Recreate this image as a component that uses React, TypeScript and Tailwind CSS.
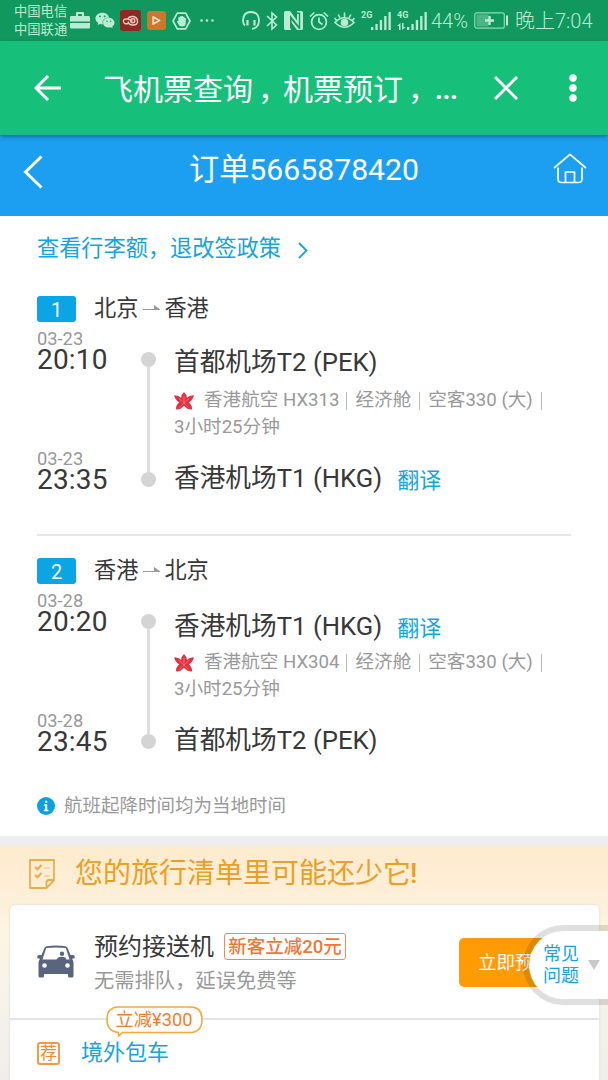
import React from "react";
import { FaWeixin } from "react-icons/fa";

type IconProps = { className?: string };

const Briefcase = ({ className }: IconProps) => (
  <svg viewBox="0 0 20 17" className={className} fill="currentColor">
    <path d="M6 4V1.2Q6 0 7.2 0h5.6Q14 0 14 1.2V4h4.600Q20 4 20 5.400V9.500H0V5.400Q0 4 1.400 4ZM8 4h4V2H8ZM0 11h20v4.300q0 1.200-1.200 1.200H1.200Q0 16.500 0 15.300Z" />
  </svg>
);

const CloudApp = ({ className }: IconProps) => (
  <svg viewBox="0 0 21 21" className={className}>
    <rect width="21" height="21" rx="3" fill="#8f2a22" />
    <g fill="none" stroke="#e8c9bd" strokeWidth="1.400">
      <path d="M8 13.500q-4 1-4.500-2T7.500 9q3 .5 5 2.500M7.500 9.500Q9 6 13 6.500t4.500 4.500-4.500 4q-4 .3-5-3.500" />
      <circle cx="12.800" cy="10.800" r="2" />
    </g>
  </svg>
);

const PlayApp = ({ className }: IconProps) => (
  <svg viewBox="0 0 19 19" className={className}>
    <rect width="19" height="19" rx="3" fill="#c9782c" />
    <path d="M6.200 6 12.500 9.500 6.200 13Z" fill="none" stroke="#f3dcc0" strokeWidth="1.900" strokeLinejoin="round" />
  </svg>
);

const HandHexagon = ({ className }: IconProps) => (
  <svg viewBox="0 0 19 18" className={className}>
    <path d="M5.300 1.200h8.400L18 9l-4.300 7.800H5.300L1 9Z" fill="none" stroke="currentColor" strokeWidth="1.700" strokeLinejoin="round" />
    <path d="M4.800 9.500 6.300 9V5.300h1.500V4.300h1.600V4H11v.8h1.400V6h1.400v5q0 3.500-3.800 3.500-3 0-3.800-2.500Z" fill="currentColor" />
  </svg>
);

const Headset = ({ className }: IconProps) => (
  <svg viewBox="0 0 18 19" className={className} fill="none" stroke="currentColor" strokeWidth="1.800">
    <path d="M3 14.500Q1 13 1 9.500 1.200 1 9 1t8 8.500q-.2 7.500-7 8.300" />
    <path d="M5.500 9v5.500M12.500 9v5.500" strokeWidth="2.200" />
  </svg>
);

const BluetoothMark = ({ className }: IconProps) => (
  <svg viewBox="0 0 12 20" className={className} fill="none" stroke="currentColor" strokeWidth="1.600">
    <path d="m1 5 9.500 9L6 18V2l4.500 4L1 15" />
  </svg>
);

const Nfc = ({ className }: IconProps) => (
  <svg viewBox="0 0 19 19" className={className} fill="currentColor">
    <path d="M0 1.500Q0 0 1.500 0H6l7 9.500V3h1.800v12L6 4v13.500h1V19H1.500Q0 19 0 17.500ZM19 17.500q0 1.500-1.500 1.500H13L7.500 11.500V9l7.500 9h1.200V1.500H13V0h4.500Q19 0 19 1.500Z" />
  </svg>
);

const Alarm = ({ className }: IconProps) => (
  <svg viewBox="0 0 20 20" className={className} fill="none" stroke="currentColor" strokeWidth="1.700">
    <circle cx="10" cy="11" r="7.400" />
    <path d="M10 6.500V11l3.500 2.500M1 5.500 5.300 1.500M19 5.500l-4.300-4" />
  </svg>
);

const Eye = ({ className }: IconProps) => (
  <svg viewBox="0 0 21 19" className={className} fill="none" stroke="currentColor" strokeWidth="1.600">
    <path d="M1 11.500Q10.500 2 20 11.500 10.500 21 1 11.500Z" />
    <circle cx="10.500" cy="11.500" r="3" fill="currentColor" />
    <path d="M10.500 6V1.500M6 7 4.200 3.500M15 7l1.800-3.500M2.500 9.500.700 7M18.500 9.500l1.800-2.500" />
  </svg>
);

const Signal = ({ className }: IconProps) => (
  <svg viewBox="0 0 20 18" className={className} fill="currentColor">
    <path d="M0 15h2.300v3H0ZM4.400 12h2.300v6H4.400ZM8.800 8h2.300v10H8.800ZM13.200 4h2.300v14h-2.300ZM17.500 0h2.300v18h-2.300Z" />
  </svg>
);

const Battery = ({ className }: IconProps) => (
  <svg viewBox="0 0 35 17" className={className}>
    <rect x=".8" y=".8" width="29.500" height="15.400" rx="2" fill="none" stroke="currentColor" strokeWidth="1.200" opacity=".75" />
    <rect x="2.500" y="2.500" width="12" height="12" fill="currentColor" opacity=".35" />
    <path d="M14.300 4h2.400v3.300H20v2.400h-3.300V13h-2.400V9.700H11V7.300h3.300ZM32 3.500h2v10h-2Z" fill="currentColor" />
  </svg>
);

const Maple = () => (
  <svg viewBox="0 0 20 18" className="h-[18px] w-[20px] shrink-0" fill="#e5303f">
    <path d="M10 0q2.800 2.500 2.900 5.800Q15.500 3 19.800 3.200q-.5 4.600-5 7.200 3.300 2.400 3.400 6.900-4.700.5-6.700-2L10 13.800l-1.500 1.500q-2 2.500-6.700 2 .1-4.500 3.400-6.900Q.7 7.800.2 3.200 4.500 3 7.100 5.800 7.200 2.500 10 0Z" />
    <path d="M10 11V4M10 11l5-4.500M10 11 5 6.500M10 11l4.500 4.500M10 11l-4.500 4.500" stroke="#f27a83" strokeWidth=".8" />
  </svg>
);

const Car = () => (
  <svg viewBox="0 0 38 33" className="h-[33px] w-[38px]">
    <path
      fillRule="evenodd"
      fill="#59657d"
      d="M9.500 1.200Q19 0 28.500 1.200q1.500.3 2.200 2L33.500 10h2.200q2 0 2 1.500v1.800l-2.700.5q1.500 1.800 1.500 4.200v13q0 1.500-1.500 1.500h-2.500q-1.500 0-1.500-1.500V29H7v2q0 1.500-1.500 1.500H3Q1.500 32.500 1.500 31V18q0-2.400 1.500-4.200l-2.700-.5v-1.800Q.3 10 2.300 10h2.200L7.300 3.200q.7-1.700 2.200-2ZM9.200 3 5.500 14.500h27L28.800 3q-9.800-1-19.600 0Z"
    />
    <circle cx="25" cy="8.800" r="2.200" fill="#59657d" />
    <path d="M19.500 15q.5-3 5-3.200t5 3.200Z" fill="#59657d" />
    <circle cx="7.500" cy="20.500" r="2.300" fill="#fff" />
    <circle cx="30.500" cy="20.500" r="2.300" fill="#fff" />
  </svg>
);

const Checklist = () => (
  <svg viewBox="0 0 26 30" className="h-[30px] w-[26px]" fill="none" stroke="#e9ae52" strokeWidth="1.800">
    <path d="M1 1h24v20.500L17.500 29H1ZM25 21h-5q-2.500 0-2.500 2.500V29" strokeLinejoin="round" />
    <path d="m6 8 2.500 2.300L12.500 6M6 16l2.500 2.300 4-4.300" strokeWidth="2.200" />
    <path d="M15 9h6M15 17h6" strokeWidth="1.200" opacity=".7" />
  </svg>
);

function StatusBar() {
  return (
    <div className="flex h-[41px] items-center overflow-hidden bg-[#11985f] pl-[14px] text-[#b9ecd2]">
      <div className="w-[56px] shrink-0 pt-px text-[13.300px] leading-[18px] whitespace-nowrap">
        <div>中国电信</div>
        <div>中国联通</div>
      </div>
      <Briefcase className="h-[17px] w-[20px] shrink-0" />
      <FaWeixin className="ml-[5px] h-[19px] w-[20px] shrink-0" />
      <CloudApp className="ml-[5px] h-[21px] w-[21px] shrink-0" />
      <PlayApp className="ml-[6px] h-[19px] w-[19px] shrink-0" />
      <HandHexagon className="ml-[6px] h-[18px] w-[19px] shrink-0" />
      <svg viewBox="0 0 14 3" className="ml-[9px] h-[3px] w-[14px] shrink-0" fill="currentColor">
        <circle cx="1.500" cy="1.500" r="1.300" />
        <circle cx="7" cy="1.500" r="1.300" />
        <circle cx="12.500" cy="1.500" r="1.300" />
      </svg>
      <Headset className="ml-[28px] h-[19px] w-[18px] shrink-0" />
      <BluetoothMark className="ml-[6px] h-[20px] w-[12px] shrink-0" />
      <Nfc className="ml-[6px] h-[19px] w-[19px] shrink-0" />
      <Alarm className="ml-[6px] h-[20px] w-[20px] shrink-0" />
      <Eye className="ml-[5px] h-[19px] w-[21px] shrink-0" />
      <div className="ml-[6px] flex h-[19px] shrink-0">
        <span className="w-[10px] text-[9px] leading-[9px] font-bold">2G</span>
        <Signal className="mt-[1px] h-[18px] w-[20px]" />
      </div>
      <div className="ml-[6px] flex h-[19px] shrink-0">
        <div className="w-[10px] text-[9px] leading-[9px] font-bold">
          <div>4G</div>
          <svg viewBox="0 0 9 7" className="mt-[3px] h-[7px] w-[9px]" fill="currentColor">
            <path d="M3.500 7H2V3H0L3.500 0ZM5 0h1.500v4h2L5 7Z" />
          </svg>
        </div>
        <Signal className="mt-[1px] h-[18px] w-[20px]" />
      </div>
      <span className="ml-[4px] w-[43px] shrink-0 text-[20px] leading-[24px] font-light">44%</span>
      <Battery className="h-[17px] w-[35px] shrink-0" />
      <span className="ml-[6px] shrink-0 text-[20px] leading-[24px] font-light whitespace-nowrap">晚上7:04</span>
    </div>
  );
}

function BrowserBar() {
  return (
    <header className="relative z-10 flex h-[94px] items-center bg-[#16c07a] text-white shadow-[0_2px_4px_rgba(0,0,0,0.3)]">
      <svg viewBox="0 0 28 26" className="ml-[34px] h-[26px] w-[28px] shrink-0" fill="none" stroke="currentColor" strokeWidth="3">
        <path d="M27 13H2.500M14 1 2 13l12 12" />
      </svg>
      <h1 className="ml-[41px] flex w-[391px] shrink-0 pt-[4px] text-[30px] leading-[36px] whitespace-nowrap">
        <span>飞机票查询</span>
        <span className="w-[30px] indent-[5px]">，</span>
        <span>机票预订</span>
        <span className="w-[30px] indent-[5px]">，</span>
        <span className="ml-[2px] text-[27px] font-bold tracking-[-0.300px]">...</span>
      </h1>
      <svg viewBox="0 0 24 24" className="h-[24px] w-[24px] shrink-0" fill="none" stroke="currentColor" strokeWidth="3">
        <path d="m1 1 22 22M23 1 1 23" />
      </svg>
      <svg viewBox="0 0 8 28" className="ml-[51px] h-[28px] w-[8px] shrink-0" fill="currentColor">
        <circle cx="4" cy="4" r="3.700" />
        <circle cx="4" cy="14" r="3.700" />
        <circle cx="4" cy="24" r="3.700" />
      </svg>
    </header>
  );
}

function OrderBar() {
  return (
    <div className="flex h-[81px] items-start justify-between bg-[#1c9ff0] pr-[21px] pl-[23px] text-white">
      <svg viewBox="0 0 20 34" className="mt-[20px] h-[34px] w-[20px]" fill="none" stroke="currentColor" strokeWidth="3">
        <path d="M18.500 1.500 2.500 17l16 15.500" />
      </svg>
      <h2 className="mt-[17px] ml-[12px] text-[30.200px] leading-[36px]">订单5665878420</h2>
      <svg viewBox="0 0 34 31" className="mt-[18px] h-[31px] w-[34px]" fill="none" stroke="currentColor" strokeWidth="1.700" strokeLinejoin="round">
        <path d="M1 15 17 1.300 33 15" />
        <path d="M5 14.500V26q0 3.500 3.500 3.500h17q3.500 0 3.500-3.500V14.500M12.500 29.500V19h9v10.500" />
      </svg>
    </div>
  );
}

type Stop = { date: string; time: string; airport: string; translate?: boolean };
type Leg = { index: number; from: string; to: string; flight: string; stops: [Stop, Stop] };

const legs: Leg[] = [
  {
    index: 1,
    from: "北京",
    to: "香港",
    flight: "HX313",
    stops: [
      { date: "03-23", time: "20:10", airport: "首都机场T2 (PEK)" },
      { date: "03-23", time: "23:35", airport: "香港机场T1 (HKG)", translate: true },
    ],
  },
  {
    index: 2,
    from: "香港",
    to: "北京",
    flight: "HX304",
    stops: [
      { date: "03-28", time: "20:20", airport: "香港机场T1 (HKG)", translate: true },
      { date: "03-28", time: "23:45", airport: "首都机场T2 (PEK)" },
    ],
  },
];

const StopTime = ({ stop }: { stop: Stop }) => (
  <div className="h-[40px]">
    <div className="text-[18.300px] leading-[18px] text-[#999]">{stop.date}</div>
    <div className="text-[28px] leading-[24px] tracking-[0.200px] text-[#383838]">{stop.time}</div>
  </div>
);

const StopAirport = ({ stop }: { stop: Stop }) => (
  <div className="flex h-[30px] items-center whitespace-nowrap">
    <span className="text-[25.700px] leading-[30px] text-[#383838]">{stop.airport}</span>
    {stop.translate && <a className="mt-[5px] ml-[15px] text-[22px] leading-[26px] text-[#12a5e6]">翻译</a>}
  </div>
);

const Bar = () => <span className="h-[18px] w-px bg-[#bbb]" />;

function LegView({ leg }: { leg: Leg }) {
  const [depart, arrive] = leg.stops;
  return (
    <section>
      <div className="flex h-[26px] items-center">
        <span className="flex h-[26px] w-[39px] items-center justify-center rounded-[3px] bg-[#0ba5e5] pt-px text-[20px] leading-[26px] text-white">
          {leg.index}
        </span>
        <div className="mb-[3px] ml-[18px] flex items-center text-[22.200px] leading-[26px] text-[#383838]">
          {leg.from}
          <svg viewBox="0 0 17 6" className="mr-[4px] ml-[5px] h-[6px] w-[17px]">
            <path d="M0 4.500h16.500L11.500 1v3" fill="#999" stroke="#999" strokeWidth="1.100" />
          </svg>
          {leg.to}
        </div>
      </div>
      <div className="mt-[8px] flex h-[160px]">
        <div className="flex w-[104px] shrink-0 flex-col gap-[80px]">
          <StopTime stop={depart} />
          <StopTime stop={arrive} />
        </div>
        <div className="flex h-[157px] w-[15px] shrink-0 flex-col items-center pt-[22px]">
          <span className="h-[15px] w-[15px] shrink-0 rounded-full bg-[#d4d4d4]" />
          <span className="w-[3px] flex-1 bg-[#dedede]" />
          <span className="h-[15px] w-[15px] shrink-0 rounded-full bg-[#d4d4d4]" />
        </div>
        <div className={depart.translate ? "ml-[18px] pt-[19px]" : "ml-[18px] pt-[17px]"}>
          <StopAirport stop={depart} />
          <div
            className={
              (depart.translate ? "mt-[8px]" : "mt-[10px]") + " flex h-[27px] items-center text-[18.600px] leading-[27px] whitespace-nowrap text-[#999]"
            }
          >
            <Maple />
            <span className="mr-[7px] ml-[10px]">香港航空 {leg.flight}</span>
            <Bar />
            <span className="mx-[8px]">经济舱</span>
            <Bar />
            <span className="mx-[8px]">空客330 (大)</span>
            <Bar />
          </div>
          <div className="text-[18.600px] leading-[27px] text-[#999]">3小时25分钟</div>
          <div className="mt-[22px]">
            <StopAirport stop={arrive} />
          </div>
        </div>
      </div>
    </section>
  );
}

function Itinerary() {
  return (
    <main className="h-[620px] bg-white px-[37px]">
      <a className="flex h-[66px] items-center text-[22.200px] text-[#17a3dd]">
        查看行李额，退改签政策
        <svg viewBox="0 0 10 17" className="mt-[3px] ml-[17px] h-[17px] w-[10px]" fill="none" stroke="currentColor" strokeWidth="1.800">
          <path d="m1 1 7.500 7.500L1 16" />
        </svg>
      </a>
      <div className="mt-[14px]">
        <LegView leg={legs[0]} />
      </div>
      <hr className="mt-[44px] h-[2px] border-0 bg-[#e6e6e6]" />
      <div className="mt-[22px]">
        <LegView leg={legs[1]} />
      </div>
      <div className="mt-[41px] flex h-[26px] items-center text-[18.500px] leading-[26px] text-[#999]">
        <svg viewBox="0 0 18 18" className="mr-[9px] h-[18px] w-[18px]">
          <circle cx="9" cy="9" r="9" fill="#0ba0e4" />
          <path d="M8 3.800h2.200V6H8ZM7 7.300h3.200v5.500h1.200v1.400H6.800v-1.400H8V8.700H7Z" fill="#fff" />
        </svg>
        航班起降时间均为当地时间
      </div>
    </main>
  );
}

function Promo() {
  return (
    <section className="h-[234px] bg-[linear-gradient(180deg,#fdebcd_0,#fdefd8_50px,#fdf5e3_85px,#f7f3ea_150px,#f0eeec_234px)]">
      <div className="flex h-[59px] items-center pb-[4px] pl-[29px]">
        <Checklist />
        <h3 className="ml-[20px] pt-px text-[28px] leading-[36px] text-[#eb9f26]">
          您的旅行清单里可能还少它<span className="ml-[-1px] font-medium">!</span>
        </h3>
      </div>
      <div className="relative ml-[10px] h-[175px] w-[589px] rounded-t-[5px] bg-white shadow-[0_0_3px_rgba(0,0,0,0.1)]">
        <div className="flex h-[115px] items-center border-b-2 border-[#e4e4e4] pl-[27px]">
          <Car />
          <div className="ml-[19px] flex-1 pt-[5px]">
            <div className="flex items-center">
              <span className="text-[24px] leading-[34px] text-[#383838]">预约接送机</span>
              <span className="ml-[10px] flex h-[27px] w-[122px] items-center justify-center rounded-[3px] border-[1.500px] border-[#f08a50] text-[18.500px] leading-[24px] font-medium whitespace-nowrap text-[#f0773a]">
                新客立减20元
              </span>
            </div>
            <div className="text-[20.300px] leading-[35px] text-[#999]">无需排队，延误免费等</div>
          </div>
          <button className="mt-[2px] mr-[28px] h-[49px] w-[112px] rounded-[5px] bg-[#ff9b05] pt-[2px] text-[18.500px] text-white">立即预定</button>
        </div>
        <div className="flex h-[60px] items-center pt-[6px] pl-[27px]">
          <span className="flex h-[23px] w-[23px] items-center justify-center rounded-[3px] border-2 border-[#f39a4a] text-[17px] leading-[19px] text-[#f08a35]">
            荐
          </span>
          <span className="ml-[21px] text-[22px] leading-[30px] text-[#17a3dd]">境外包车</span>
        </div>
        <div className="absolute top-[101px] left-[96px] h-[31px] w-[97px]">
          <svg viewBox="0 0 97 31" className="absolute inset-0 h-[31px] w-[97px]" fill="#fff" stroke="#f3a93b" strokeWidth="1.600">
            <path d="M12 1h72.500Q96 1 96 13.500T84.500 26.500H16.500L12.500 30v-3.500Q1 25.500 1 13.500T12 1Z" />
          </svg>
          <span className="relative flex h-[27px] items-center justify-center pr-px text-[18.300px] leading-[26px] whitespace-nowrap text-[#f07f2c]">立减¥300</span>
        </div>
      </div>
    </section>
  );
}

export default function App() {
  return (
    <div className="relative h-[1080px] w-[608px] overflow-hidden bg-white font-['Roboto','Noto_Sans_CJK_SC',sans-serif]" lang="zh-CN">
      <StatusBar />
      <BrowserBar />
      <OrderBar />
      <Itinerary />
      <div className="h-[10px] bg-[#eeeef0]" />
      <Promo />
      <button className="absolute top-[925px] -right-[6px] flex h-[80px] w-[91px] items-center rounded-l-full border-[6px] border-[#00000020] bg-white bg-clip-padding pl-[14px] text-left text-[18px] leading-[22px] text-[#17a3dd]">
        <span className="w-[36px] shrink-0">常见问题</span>
        <svg viewBox="0 0 12 10" className="ml-[9px] h-[10px] w-[12px] shrink-0" fill="#c9c9c9">
          <path d="M0 0h12L6 10Z" />
        </svg>
      </button>
    </div>
  );
}
